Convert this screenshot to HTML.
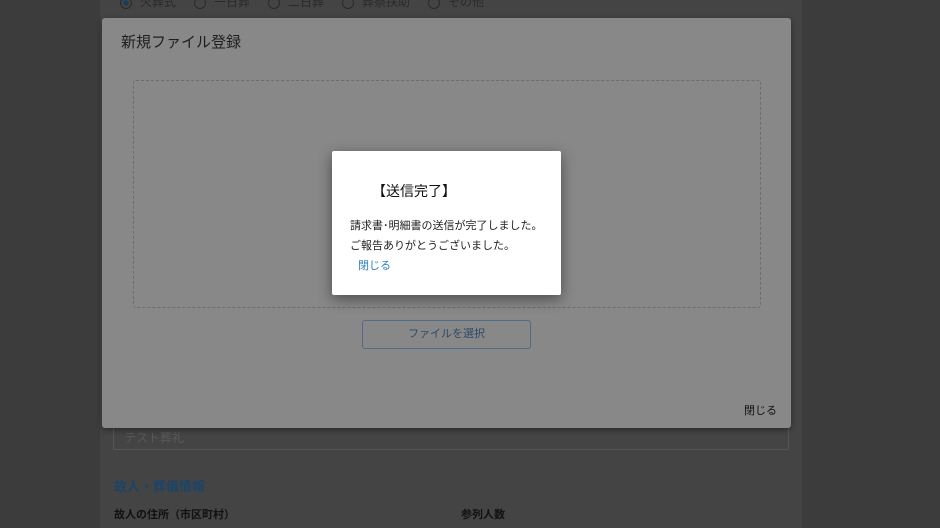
<!DOCTYPE html>
<html><head><meta charset="utf-8"><style>
*{margin:0;padding:0;box-sizing:border-box}
body{width:940px;height:528px;overflow:hidden;background:#3c3c3c;font-family:"Liberation Sans","Noto Sans CJK JP",sans-serif;position:relative}
.col{position:absolute;left:100px;top:0;width:702px;height:528px;background:#444}
.radios{position:absolute;top:-7px;left:120px;font-size:12px;color:#2a2a2a;white-space:nowrap}
.radios span{display:inline-block;margin-right:18px}
.radios i{display:inline-block;width:12px;height:12px;border:1px solid #2a2a2a;border-radius:50%;vertical-align:middle;margin-right:8px}
.field{position:absolute;left:113px;top:420px;width:676px;height:30px;border:1px solid #555;border-radius:2px;color:#5a5a5a;font-size:12px;padding:8px 10px 0}
.sec{position:absolute;left:114px;top:476px;font-size:13px;font-weight:bold;color:#1d4466}
.lab{position:absolute;top:506px;font-size:11px;font-weight:bold;color:#111}
.modal{position:absolute;left:102px;top:18px;width:689px;height:410px;background:#888;border-radius:3px;box-shadow:0 2px 6px rgba(0,0,0,.4)}
.modal h2{position:absolute;left:19px;top:13px;font-size:15px;font-weight:normal;color:#1e1e1e}
.drop{position:absolute;left:31px;top:62px;width:628px;height:228px;border:1px dashed #6c6c6c;border-radius:3px}
.btn{position:absolute;left:260px;top:302px;width:169px;height:29px;border:1px solid #4f6c86;border-radius:3px;text-align:center;line-height:27px;font-size:11px;color:#2b4a67}
.close{position:absolute;right:14px;top:384px;font-size:11px;color:#111}
.dlg{position:absolute;left:332px;top:151px;width:229px;height:144px;background:#fff;border-radius:2px;box-shadow:0 4px 14px rgba(0,0,0,.45)}
.dlg h3{position:absolute;left:40px;top:30px;font-size:14px;font-weight:normal;color:#111}
.dlg p{position:absolute;left:18px;top:65px;font-size:11px;line-height:20px;color:#222;white-space:nowrap}
.dlg a{position:absolute;left:26px;top:106px;font-size:11px;color:#2d7fb8;text-decoration:none}
</style></head><body>
<div class="col"></div>
<div class="radios"><span><i style="background:radial-gradient(#1d3a5c 35%,transparent 40%)"></i>火葬式</span><span><i></i>一日葬</span><span><i></i>二日葬</span><span><i></i>葬祭扶助</span><span><i></i>その他</span></div>
<div class="field">テスト葬礼</div>
<div class="sec">故人・葬儀情報</div>
<div class="lab" style="left:114px">故人の住所（市区町村）</div>
<div class="lab" style="left:461px">参列人数</div>
<div class="modal">
<h2>新規ファイル登録</h2>
<div class="drop"></div>
<div class="btn">ファイルを選択</div>
<div class="close">閉じる</div>
</div>
<div class="dlg">
<h3>【送信完了】</h3>
<p>請求書･明細書の送信が完了しました。<br>ご報告ありがとうございました。</p>
<a>閉じる</a>
</div>
</body></html>
